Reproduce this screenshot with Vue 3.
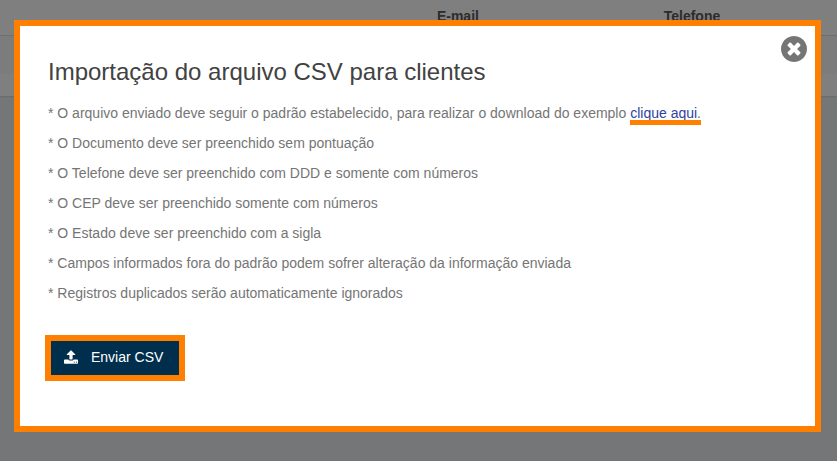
<script setup>
import { ref } from 'vue'

const open = ref(true)
const rules = [
  'O Documento deve ser preenchido sem pontuação',
  'O Telefone deve ser preenchido com DDD e somente com números',
  'O CEP deve ser preenchido somente com números',
  'O Estado deve ser preenchido com a sigla',
  'Campos informados fora do padrão podem sofrer alteração da informação enviada',
  'Registros duplicados serão automaticamente ignorados',
]
</script>

<template>
  <div class="page">
    <div class="panel">
      <table class="clients">
        <thead>
          <tr>
            <th class="first"></th>
            <th class="mail" scope="col">E-mail</th>
            <th scope="col">Telefone</th>
          </tr>
        </thead>
        <tbody>
          <tr>
            <td></td>
            <td></td>
            <td></td>
          </tr>
        </tbody>
      </table>
    </div>

    <div v-if="open" class="overlay">
      <section class="modal" role="dialog" aria-labelledby="modal-title">
        <button class="close" type="button" aria-label="Fechar" @click="open = false">
          <svg viewBox="0 0 1536 1536" width="26" height="26" aria-hidden="true">
            <path
              fill="#757575"
              d="M1149 1122q0-26-19-45L949 896l181-181q19-19 19-45 0-27-19-46l-90-90q-19-19-46-19-26 0-45 19L768 715 587 534q-19-19-45-19-27 0-46 19l-90 90q-19 19-19 46 0 26 19 45l181 181-181 181q-19 19-19 45 0 27 19 46l90 90q19 19 46 19 26 0 45-19l181-181 181 181q19 19 45 19 27 0 46-19l90-90q19-19 19-46zM1536 896q0 209-103 385.500T1153.500 1561 768 1664 382.500 1561 103 1281.500 0 896 103 510.500 382.500 231 768 128 1153.500 231 1433 510.500 1536 896z"
              transform="translate(0 -128)"
            />
          </svg>
        </button>
        <h1 id="modal-title">Importação do arquivo CSV para clientes</h1>
        <p>
          * O arquivo enviado deve seguir o padrão estabelecido, para realizar o download do exemplo
          <span class="marked"><a href="#">clique aqui</a>.</span>
        </p>
        <p v-for="rule in rules" :key="rule">* {{ rule }}</p>
        <button class="send" type="button">
          <svg viewBox="0 64 1664 1600" width="14" height="14" aria-hidden="true">
            <path
              fill="#fff"
              d="M1280 1472q0-26-19-45t-45-19-45 19-19 45 19 45 45 19 45-19 19-45zm256 0q0-26-19-45t-45-19-45 19-19 45 19 45 45 19 45-19 19-45zm128-224v320q0 40-28 68t-68 28h-1472q-40 0-68-28t-28-68v-320q0-40 28-68t68-28h427q21 56 70.500 92t110.500 36h256q61 0 110.500-36t70.500-92h427q40 0 68 28t28 68zm-325-648q-17 40-59 40h-256v448q0 26-19 45t-45 19h-256q-26 0-45-19t-19-45v-448h-256q-42 0-59-40-17-39 14-69l448-448q18-19 45-19t45 19l448 448q31 30 14 69z"
            />
          </svg>
          <span>Enviar CSV</span>
        </button>
      </section>
    </div>
  </div>
</template>

<style>
body {
  margin: 0;
  background: #757678;
}
</style>

<style scoped>
.page {
  position: relative;
  min-height: 100vh;
  font-family: "Liberation Sans", Arial, sans-serif;
  font-size: 14px;
  line-height: 20px;
  color: #757575;
}
.panel {
  padding-bottom: 22px;
  background: #7f7f7f;
  box-shadow: 0 1px 1px #6c6d6f;
}
.clients {
  width: 100%;
  table-layout: fixed;
  border-collapse: collapse;
}
.clients th {
  height: 35px;
  padding: 6px 0 0;
  box-sizing: border-box;
  border-bottom: 1px solid #6f6f6f;
  color: #2c2c2c;
  text-align: left;
  vertical-align: top;
}
.clients .first {
  width: 52.2%;
}
.clients .mail {
  width: 27.1%;
}
.clients td {
  height: 38px;
  padding: 0;
  background: #7c7c7c;
}
.overlay {
  position: absolute;
  inset: 0;
  padding: 20px 16px 20px 14px;
}
.modal {
  position: relative;
  padding: 28px 28px 45px;
  border: 6px solid #ff8000;
  background: #fff;
}
h1 {
  margin: 0 0 13px;
  font-size: 24px;
  line-height: 36px;
  font-weight: 400;
  color: #424242;
}
p {
  margin: 0 0 10px;
}
.marked {
  position: relative;
  display: inline-block;
}
.marked::after {
  content: "";
  position: absolute;
  left: 0;
  right: 0;
  bottom: -2px;
  height: 5px;
  background: #ff8000;
}
a {
  color: #303f9f;
  text-decoration: none;
}
button {
  font: inherit;
  cursor: pointer;
}
.close {
  position: absolute;
  top: 10px;
  right: 8px;
  display: flex;
  padding: 0;
  border: 0;
  background: none;
}
.send {
  display: flex;
  align-items: center;
  gap: 13px;
  height: 46px;
  margin: 32px 0 0 -3px;
  padding: 0 16px 2px 13px;
  border: 6px solid #ff8000;
  background: #002f4d;
  color: #fff;
}
</style>
